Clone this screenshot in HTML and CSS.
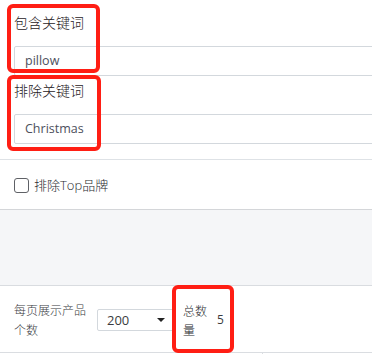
FILE: index.html
```html
<!DOCTYPE html>
<html lang="zh">
<head>
<meta charset="utf-8">
<link rel="stylesheet" href="styles.css">
</head>
<body>
<div class="page">
  <section class="keywords">
    <div class="field first">
      <div class="label">包含关键词</div>
      <div class="input">pillow</div>
    </div>
    <div class="field second">
      <div class="label">排除关键词</div>
      <div class="input">Christmas</div>
    </div>
  </section>
  <section class="check-row">
    <span class="checkbox"></span>
    <span class="check-label">排除Top品牌</span>
  </section>
  <section class="gray"></section>
  <section class="pager">
    <div class="pager-label">每页展示产品个数</div>
    <div class="select"><span>200</span><span class="caret"></span></div>
    <div class="total-label">总数量</div>
    <div class="total-value">5</div>
  </section>
  <div class="tail"><span class="tail-div"></span></div>
</div>
<div class="mark mark1"></div>
<div class="mark mark2"></div>
<div class="mark mark3"></div>
</body>
</html>
```
FILE: styles.css
```css
html, body {
  margin: 0;
  padding: 0;
  background: #fff;
  overflow: hidden;
}
body {
  font-family: "Open Sans", "Noto Sans CJK SC", sans-serif;
  color: #212529;
  width: 372px;
  height: 354px;
  position: relative;
}
.page {
  display: flex;
  flex-direction: column;
}
.keywords {
  padding: 0 0 15px 14px;
  border-bottom: 1px solid #dee2e6;
  overflow: hidden;
}
.field.first { padding-top: 11px; }
.field.second { padding-top: 3px; }
.label {
  font-family: "Noto Sans CJK SC", sans-serif;
  font-weight: 300;
  font-size: 14px;
  line-height: 22px;
  height: 22px;
  margin-bottom: 13px;
  color: #1f2124;
}
.input {
  box-sizing: border-box;
  height: 30px;
  width: calc(100% + 4px);
  border: 1px solid #d3d8dd;
  border-radius: 2px;
  padding-left: 10px;
  font-size: 12.5px;
  line-height: 28px;
  color: #4d4f5c;
}
.check-row {
  height: 49px;
  display: flex;
  align-items: center;
  padding-left: 14px;
  border-bottom: 1px solid #d4d6d9;
}
.checkbox {
  box-sizing: border-box;
  width: 15px;
  height: 15px;
  border: 1px solid #5f6166;
  border-radius: 3px;
  margin-right: 5px;
  margin-top: 1px;
}
.check-label {
  font-family: "Open Sans", "Noto Sans CJK SC", sans-serif;
  font-weight: 300;
  font-size: 13px;
  color: #2a2c30;
}
.gray {
  height: 75px;
  background: #f5f6f8;
  border-bottom: 1px solid #d9dce0;
}
.pager {
  height: 66px;
  display: flex;
  align-items: center;
  padding-left: 14px;
  border-bottom: 1px solid #dadde1;
}
.pager-label {
  width: 76px;
  font-family: "Noto Sans CJK SC", sans-serif;
  font-weight: 300;
  font-size: 12px;
  line-height: 20px;
  color: #3a3c42;
  margin-top: 1px;
}
.select {
  box-sizing: border-box;
  margin-left: 7px;
  width: 78px;
  height: 22px;
  border: 1px solid #d3d8dd;
  border-radius: 2px;
  display: flex;
  align-items: center;
  justify-content: space-between;
  padding: 0 9px 0 9px;
  font-size: 13px;
  color: #3a3c40;
  margin-top: 2px;
}
.caret {
  width: 0;
  height: 0;
  border-left: 4px solid transparent;
  border-right: 4px solid transparent;
  border-top: 4px solid #222;
}
.total-label {
  margin-left: 8px;
  width: 26px;
  font-family: "Noto Sans CJK SC", sans-serif;
  font-weight: 300;
  font-size: 12px;
  line-height: 19px;
  color: #2a2c30;
  margin-top: 2px;
}
.total-value {
  margin-left: 8px;
  font-size: 12px;
  color: #3a3c40;
  margin-top: 1px;
}
.tail {
  height: 2px;
  position: relative;
}
.tail-div {
  position: absolute;
  left: 262px;
  top: 0;
  width: 1px;
  height: 2px;
  background: #dadde1;
}
.mark {
  position: absolute;
  box-sizing: border-box;
  border: 4px solid #ff1e14;
  border-radius: 6px;
}
.mark1 { left: 7px; top: 4px; width: 93px; height: 69px; }
.mark2 { left: 7px; top: 75px; width: 94px; height: 76px; }
.mark3 { left: 172px; top: 285px; width: 62px; height: 68px; }
```
